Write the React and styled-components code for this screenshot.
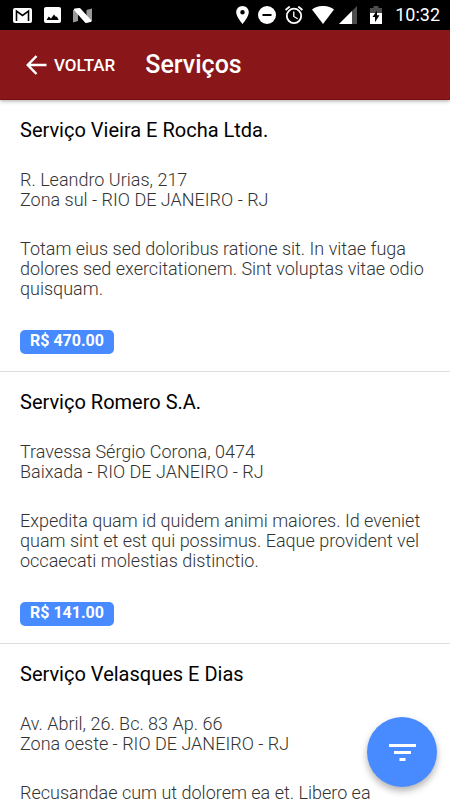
import React from 'react';
import styled, { createGlobalStyle } from 'styled-components';

const red800 = '#89171a';
const red900 = '#7a0d10';
const blue500 = '#488aff';
const grey300 = '#dedede';
const grey700 = '#333333';

const GlobalStyle = createGlobalStyle`
  * {
    box-sizing: border-box;
  }

  body {
    margin: 0;
    background-color: white;
    font-family: Roboto, 'Noto Sans', sans-serif;
  }
`;

const Screen = styled.div`
  display: flex;
  flex-direction: column;
  height: 100vh;
`;

const StatusBar = styled.div`
  display: flex;
  flex: none;
  justify-content: space-between;
  align-items: center;
  height: 30px;
  padding: 0 10px 0 13px;
  background-color: black;
  color: white;
`;

const StatusGroup = styled.div`
  display: flex;
  align-items: center;
  gap: ${({ $gap }) => $gap}px;
`;

const StatusIcon = styled.svg`
  display: block;
  fill: currentColor;
`;

const Clock = styled.time`
  font-size: 18px;
  line-height: 32px;
  font-weight: 400;
`;

const Header = styled.header`
  display: flex;
  flex: none;
  align-items: center;
  gap: 30px;
  height: 70px;
  padding: 0 26px;
  border-bottom: 1px solid ${red900};
  background-color: ${red800};
  color: white;
  box-shadow: 0 1px 4px rgba(0, 0, 0, 0.35);
  z-index: 1;
`;

const BackButton = styled.button`
  display: flex;
  align-items: center;
  gap: 7px;
  padding: 0;
  border: none;
  background: none;
  color: white;
  font-family: inherit;
  font-size: 17px;
  line-height: 24px;
  font-weight: 500;
  cursor: pointer;
`;

const Title = styled.h1`
  margin: 0;
  font-size: 25px;
  line-height: 32px;
  font-weight: 500;
`;

const List = styled.ul`
  flex: 1;
  min-height: 0;
  margin: 0;
  padding: 0;
  list-style: none;
  overflow-y: auto;
  scrollbar-width: none;
`;

const Item = styled.li`
  padding: 18px 20px 17px;
  border-bottom: 1px solid ${grey300};
`;

const Name = styled.h2`
  margin: 0 0 28px;
  color: black;
  font-size: 20px;
  line-height: 24px;
  font-weight: 400;
`;

const Text = styled.p`
  margin: 0 0 29px;
  color: ${grey700};
  font-size: 18px;
  line-height: 20px;
  font-weight: 300;
`;

const Badge = styled.span`
  display: block;
  width: fit-content;
  height: 24px;
  margin-top: 31px;
  padding: 0 10px;
  border-radius: 5px;
  background-color: ${blue500};
  color: white;
  font-size: 16px;
  line-height: 22px;
  font-weight: 700;
`;

const Fab = styled.button`
  position: fixed;
  right: 13px;
  bottom: 13px;
  display: flex;
  align-items: center;
  justify-content: center;
  width: 70px;
  height: 70px;
  padding: 0;
  border: none;
  border-radius: 50%;
  background-color: ${blue500};
  color: white;
  box-shadow: 0 4px 7px rgba(0, 0, 0, 0.3);
  cursor: pointer;
  z-index: 2;
`;

const services = [
  {
    name: 'Serviço Vieira E Rocha Ltda.',
    street: 'R. Leandro Urias, 217',
    region: 'Zona sul - RIO DE JANEIRO - RJ',
    description:
      'Totam eius sed doloribus ratione sit. In vitae fuga dolores sed exercitationem. Sint voluptas vitae odio quisquam.',
    price: 'R$ 470.00',
  },
  {
    name: 'Serviço Romero S.A.',
    street: 'Travessa Sérgio Corona, 0474',
    region: 'Baixada - RIO DE JANEIRO - RJ',
    description:
      'Expedita quam id quidem animi maiores. Id eveniet quam sint et est qui possimus. Eaque provident vel occaecati molestias distinctio.',
    price: 'R$ 141.00',
  },
  {
    name: 'Serviço Velasques E Dias',
    street: 'Av. Abril, 26. Bc. 83 Ap. 66',
    region: 'Zona oeste - RIO DE JANEIRO - RJ',
    description: 'Recusandae cum ut dolorem ea et. Libero ea',
  },
];

function Notifications() {
  return (
    <StatusGroup $gap={12}>
      <StatusIcon width="19" height="15" viewBox="0 0 19 15">
        <rect width="19" height="15" rx="2" />
        <path d="M3.500 13V3l6 4.500 6-4.500v10" fill="none" stroke="black" strokeWidth="1.600" />
      </StatusIcon>
      <StatusIcon width="17" height="16" viewBox="0 0 17 16">
        <rect width="17" height="16" rx="2" />
        <path d="M2.500 13l2.200-3.500 2.300 2 3-4 2 2.500.8-.5 1.900 3.500z" fill="black" />
      </StatusIcon>
      <StatusIcon width="19" height="15" viewBox="0 0 19 15">
        <path d="M0 2l5-1.500V13L0 14.500zM13.500 2L19 .5V13l-5.500 1.500z" fill="#999" />
        <path d="M2 1.500L6.500 1 17.500 13 13 14z" stroke="white" strokeWidth="2" strokeLinejoin="round" />
      </StatusIcon>
    </StatusGroup>
  );
}

function SystemStatus() {
  return (
    <StatusGroup $gap={13}>
      <StatusGroup $gap={5}>
        <StatusGroup $gap={9}>
          <StatusIcon width="13" height="18" viewBox="5 2 14 20">
            <path d="M12 2C8.130 2 5 5.130 5 9c0 5.250 7 13 7 13s7-7.750 7-13c0-3.870-3.130-7-7-7zm0 9.500a2.500 2.500 0 1 1 0-5 2.500 2.500 0 0 1 0 5z" />
          </StatusIcon>
          <StatusIcon width="18" height="18" viewBox="0 0 18 18">
            <circle cx="9" cy="9" r="9" />
            <path d="M4.500 8h9v2h-9z" fill="black" />
          </StatusIcon>
          <StatusIcon width="18" height="18" viewBox="2 2 20 20">
            <path d="M22 5.720l-4.600-3.860-1.290 1.530 4.600 3.860L22 5.720zM7.880 3.390L6.600 1.860 2 5.710l1.290 1.530 4.590-3.850zM12.500 8H11v6l4.750 2.850.75-1.230-4-2.370V8zM12 4a9 9 0 1 0 0 18 9 9 0 0 0 0-18zm0 16a7 7 0 1 1 0-14 7 7 0 0 1 0 14z" />
          </StatusIcon>
          <StatusIcon width="22" height="18" viewBox="0 0 22 18">
            <path d="M0 3.500C6-1.200 16-1.200 22 3.500L11 18z" />
          </StatusIcon>
        </StatusGroup>
        <StatusIcon width="18" height="18" viewBox="0 0 18 18">
          <path d="M18 0v18H0z" fill="#4d4d4d" />
          <path d="M13 5v13H0z" />
        </StatusIcon>
      </StatusGroup>
      <StatusIcon width="12" height="18" viewBox="0 0 12 18">
        <path d="M3.500 0h5v2H12v5H0V2h3.500z" fill="#4d4d4d" />
        <path d="M0 7h12v11H0z" />
        <path d="M7 4.500v4.800h2.500L5 16.300v-5.200H2.500z" fill="black" />
      </StatusIcon>
      <Clock>10:32</Clock>
    </StatusGroup>
  );
}

function Service({ name, street, region, description, price }) {
  return (
    <Item>
      <Name>{name}</Name>
      <Text>
        {street}
        <br />
        {region}
      </Text>
      <Text>{description}</Text>
      {price && <Badge>{price}</Badge>}
    </Item>
  );
}

function App() {
  return (
    <Screen>
      <GlobalStyle />
      <StatusBar>
        <Notifications />
        <SystemStatus />
      </StatusBar>
      <Header>
        <BackButton type="button">
          <svg width="21" height="20" viewBox="0 0 21 20" fill="none" stroke="currentColor" strokeWidth="2.500">
            <path d="M10.500 1L1.800 10l8.700 9M2 10h18.500" />
          </svg>
          VOLTAR
        </BackButton>
        <Title>Serviços</Title>
      </Header>
      <List>
        {services.map((service) => (
          <Service key={service.name} {...service} />
        ))}
      </List>
      <Fab type="button" aria-label="Filtrar">
        <svg width="27" height="17" viewBox="0 0 27 17" fill="currentColor">
          <path d="M0 0h27v3H0zM5 7h17v3H5zM10.500 14h6v3h-6z" />
        </svg>
      </Fab>
    </Screen>
  );
}

export default App;
